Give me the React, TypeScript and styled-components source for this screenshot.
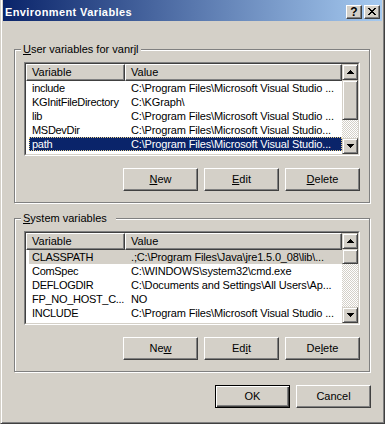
import React from 'react';
import styled, { createGlobalStyle } from 'styled-components';

const face = '#d4d0c8';
const shadow = '#808080';
const darkShadow = '#404040';
const highlight = '#ffffff';
const navy = '#0a246a';

const GlobalStyle = createGlobalStyle`
  html, body {
    margin: 0;
    padding: 0;
    background: #ffffff;
  }
  body {
    font-family: Tahoma, "Liberation Sans", Arial, sans-serif;
    font-size: 11px;
    color: #000;
  }
  * {
    box-sizing: border-box;
  }
`;

type Row = { name: string; value: string };

const userVars: Row[] = [
  { name: 'include', value: 'C:\\Program Files\\Microsoft Visual Studio ...' },
  { name: 'KGInitFileDirectory', value: 'C:\\KGraph\\' },
  { name: 'lib', value: 'C:\\Program Files\\Microsoft Visual Studio ...' },
  { name: 'MSDevDir', value: 'C:\\Program Files\\Microsoft Visual Studio...' },
  { name: 'path', value: 'C:\\Program Files\\Microsoft Visual Studio...' },
  { name: 'TEMP', value: 'C:\\Documents and Settings\\vanrjl\\Local Settings\\Temp' },
];

const systemVars: Row[] = [
  { name: 'CLASSPATH', value: '.;C:\\Program Files\\Java\\jre1.5.0_08\\lib\\...' },
  { name: 'ComSpec', value: 'C:\\WINDOWS\\system32\\cmd.exe' },
  { name: 'DEFLOGDIR', value: 'C:\\Documents and Settings\\All Users\\Ap...' },
  { name: 'FP_NO_HOST_C...', value: 'NO' },
  { name: 'INCLUDE', value: 'C:\\Program Files\\Microsoft Visual Studio ...' },
  { name: 'lib', value: 'C:\\Program Files\\Microsoft Visual Studio ...' },
];

const Window = styled.div`
  width: 385px;
  height: 424px;
  background: ${face};
  border: 1px solid;
  border-top: none;
  border-color: ${face} ${darkShadow} ${darkShadow} ${face};
  box-shadow: inset 1px 0 ${highlight}, inset -1px -1px ${shadow};
  padding: 0 2px 2px 2px;
  display: flex;
  flex-direction: column;
`;

const Caption = styled.div`
  height: 21px;
  display: flex;
  align-items: flex-end;
  gap: 2px;
  padding: 0 2px 2px 2px;
  background: linear-gradient(to right, ${navy}, #a6caf0);
`;

const CaptionText = styled.div`
  flex: 1;
  color: #fff;
  font-weight: bold;
  font-size: 11px;
  line-height: 14px;
  letter-spacing: 0.4px;
  white-space: nowrap;
`;

const Raised = styled.div`
  background: ${face};
  border: 1px solid;
  border-color: ${highlight} ${darkShadow} ${darkShadow} ${highlight};
  box-shadow: inset -1px -1px ${shadow};
`;

const CaptionButton = styled(Raised)`
  width: 16px;
  height: 14px;
  display: flex;
  align-items: center;
  justify-content: center;
  font-weight: bold;
  font-size: 12px;
  line-height: 12px;
  padding-bottom: 1px;
`;

const Body = styled.div`
  flex: 1;
  display: flex;
  flex-direction: column;
  padding: 28px 11px 0 11px;
`;

const Group = styled.div<{ $top?: number }>`
  position: relative;
  margin-top: ${(p) => p.$top ?? 0}px;
  margin-right: 1px;
  border: 1px solid ${shadow};
  box-shadow: inset 1px 1px ${highlight}, 1px 1px ${highlight};
  padding: 12px 9px 11px 9px;
`;

const GroupLabel = styled.span<{ $tail?: number }>`
  position: absolute;
  top: -7px;
  left: 6px;
  padding: 0 ${(p) => p.$tail ?? 2}px 0 2px;
  background: ${face};
  line-height: 13px;
  white-space: nowrap;
`;

const ListFrame = styled.div`
  height: 94px;
  border: 1px solid;
  border-color: ${shadow} ${highlight} ${highlight} ${shadow};
`;

const ListInner = styled.div`
  height: 100%;
  border: 1px solid;
  border-color: ${darkShadow} ${face} ${face} ${darkShadow};
  background: #fff;
  display: flex;
  overflow: hidden;
`;

const ListBody = styled.div`
  flex: 1;
  min-width: 0;
  overflow: hidden;
`;

const HeaderRow = styled.div`
  display: flex;
  height: 17px;
`;

const HeaderCell = styled(Raised)<{ $w?: number }>`
  ${(p) => (p.$w ? `width: ${p.$w}px;` : 'flex: 1;')}
  height: 17px;
  padding-left: 5px;
  line-height: 14px;
  white-space: nowrap;
  overflow: hidden;
`;

const ItemRow = styled.div<{ $sel: 'none' | 'active' | 'inactive' }>`
  display: flex;
  height: 14px;
  margin-left: 3px;
  line-height: 14px;
  white-space: nowrap;
  background: ${(p) => (p.$sel === 'active' ? navy : p.$sel === 'inactive' ? face : 'transparent')};
  color: ${(p) => (p.$sel === 'active' ? '#fff' : '#000')};
  outline: ${(p) => (p.$sel === 'active' ? '1px dotted #e6cf86' : 'none')};
  outline-offset: -1px;
`;

const NameCell = styled.div`
  width: 97px;
  padding-left: 3px;
  letter-spacing: -0.3px;
  overflow: hidden;
`;

const ValueCell = styled.div`
  flex: 1;
  padding-left: 5px;
  letter-spacing: -0.15px;
  overflow: hidden;
`;

const ScrollBar = styled.div`
  width: 16px;
  display: flex;
  flex-direction: column;
`;

const ScrollButton = styled.div`
  width: 16px;
  height: 16px;
  background: ${face};
  border: 1px solid;
  border-color: ${face} ${darkShadow} ${darkShadow} ${face};
  box-shadow: inset 1px 1px ${highlight}, inset -1px -1px ${shadow};
  display: flex;
  align-items: center;
  justify-content: center;
`;

const Thumb = styled(ScrollButton)<{ $h: number }>`
  height: ${(p) => p.$h}px;
`;

const Track = styled.div`
  flex: 1;
  background-color: ${face};
  background-image: conic-gradient(#fff 25%, ${face} 0 50%, #fff 0 75%, ${face} 0);
  background-size: 2px 2px;
`;

const ButtonRow = styled.div`
  display: flex;
  justify-content: flex-end;
  gap: 6px;
  margin-top: 12px;
`;

const PushButton = styled.button<{ $default?: boolean }>`
  width: 75px;
  height: 23px;
  padding: 0;
  margin: 0;
  font: inherit;
  color: #000;
  background: ${face};
  border: 1px solid;
  border-color: ${(p) => (p.$default ? '#000' : `${highlight} ${darkShadow} ${darkShadow} ${highlight}`)};
  box-shadow: ${(p) =>
    p.$default
      ? `inset 1px 1px ${highlight}, inset -1px -1px ${darkShadow}, inset -2px -2px ${shadow}`
      : `inset -1px -1px ${shadow}`};
  line-height: 19px;
  text-align: center;
`;

const Footer = styled.div`
  display: flex;
  justify-content: flex-end;
  gap: 6px;
  margin-top: 13px;
`;

const Arrow = ({ up }: { up?: boolean }) => (
  <svg width="7" height="4" viewBox="0 0 7 4" shapeRendering="crispEdges" style={{ marginTop: up ? -1 : 0 }}>
    {[0, 1, 2, 3].map((i) => {
      const y = up ? i : 3 - i;
      return <rect key={i} x={3 - i} y={y} width={1 + i * 2} height={1} fill="#000" />;
    })}
  </svg>
);

const CloseGlyph = () => (
  <svg width="8" height="7" viewBox="0 0 8 7" shapeRendering="crispEdges">
    {[
      [0, 0], [6, 0],
      [1, 1], [5, 1],
      [2, 2], [4, 2],
      [3, 3],
      [2, 4], [4, 4],
      [1, 5], [5, 5],
      [0, 6], [6, 6],
    ].map(([x, y], i) => (
      <rect key={i} x={x} y={y} width={2} height={1} fill="#000" />
    ))}
  </svg>
);

interface ListViewProps {
  rows: Row[];
  selected: number;
  focused: boolean;
  thumb: number;
}

const ListView: React.FC<ListViewProps> = ({ rows, selected, focused, thumb }) => (
  <ListFrame>
    <ListInner>
      <ListBody>
        <HeaderRow>
          <HeaderCell $w={99}>Variable</HeaderCell>
          <HeaderCell>Value</HeaderCell>
        </HeaderRow>
        {rows.map((r, i) => (
          <ItemRow key={r.name + i} $sel={i === selected ? (focused ? 'active' : 'inactive') : 'none'}>
            <NameCell>{r.name}</NameCell>
            <ValueCell>{r.value}</ValueCell>
          </ItemRow>
        ))}
      </ListBody>
      <ScrollBar>
        <ScrollButton>
          <Arrow up />
        </ScrollButton>
        <Thumb $h={thumb} />
        <Track />
        <ScrollButton>
          <Arrow />
        </ScrollButton>
      </ScrollBar>
    </ListInner>
  </ListFrame>
);

const Key = ({ children }: { children: React.ReactNode }) => <u>{children}</u>;

export default function App() {
  return (
    <>
      <GlobalStyle />
      <Window>
        <Caption>
          <CaptionText>Environment Variables</CaptionText>
          <CaptionButton>?</CaptionButton>
          <CaptionButton>
            <CloseGlyph />
          </CaptionButton>
        </Caption>
        <Body>
          <Group>
            <GroupLabel>
              <Key>U</Key>ser variables for vanrjl
            </GroupLabel>
            <ListView rows={userVars} selected={4} focused thumb={40} />
            <ButtonRow>
              <PushButton>
                <Key>N</Key>ew
              </PushButton>
              <PushButton>
                <Key>E</Key>dit
              </PushButton>
              <PushButton>
                <Key>D</Key>elete
              </PushButton>
            </ButtonRow>
          </Group>
          <Group $top={15}>
            <GroupLabel $tail={9}>
              <Key>S</Key>ystem variables
            </GroupLabel>
            <ListView rows={systemVars} selected={0} focused={false} thumb={15} />
            <ButtonRow>
              <PushButton>
                Ne<Key>w</Key>
              </PushButton>
              <PushButton>
                Ed<Key>i</Key>t
              </PushButton>
              <PushButton>
                De<Key>l</Key>ete
              </PushButton>
            </ButtonRow>
          </Group>
          <Footer>
            <PushButton $default>OK</PushButton>
            <PushButton>Cancel</PushButton>
          </Footer>
        </Body>
      </Window>
    </>
  );
}
